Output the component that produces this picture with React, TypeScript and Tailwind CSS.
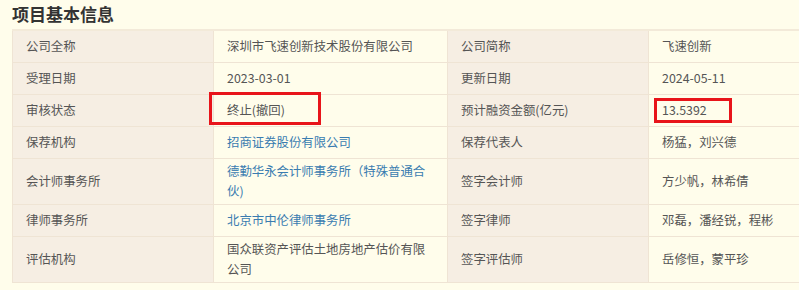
const FONT = { fontFamily: '"Noto Sans CJK SC", "Liberation Sans", sans-serif' }

type Cell = { text: string; link?: boolean; mark?: 'a' | 'b' }
type Row = { l1: string; v1: Cell; l2: string; v2: Cell; tall?: boolean }

const rows: Row[] = [
  { l1: '公司全称', v1: { text: '深圳市飞速创新技术股份有限公司' }, l2: '公司简称', v2: { text: '飞速创新' } },
  { l1: '受理日期', v1: { text: '2023-03-01' }, l2: '更新日期', v2: { text: '2024-05-11' } },
  { l1: '审核状态', v1: { text: '终止(撤回)', mark: 'a' }, l2: '预计融资金额(亿元)', v2: { text: '13.5392', mark: 'b' } },
  { l1: '保荐机构', v1: { text: '招商证券股份有限公司', link: true }, l2: '保荐代表人', v2: { text: '杨猛，刘兴德' } },
  { l1: '会计师事务所', v1: { text: '德勤华永会计师事务所（特殊普通合伙)', link: true }, l2: '签字会计师', v2: { text: '方少帆，林希倩' }, tall: true },
  { l1: '律师事务所', v1: { text: '北京市中伦律师事务所', link: true }, l2: '签字律师', v2: { text: '邓磊，潘经锐，程彬' } },
  { l1: '评估机构', v1: { text: '国众联资产评估土地房地产估价有限公司' }, l2: '签字评估师', v2: { text: '岳修恒，蒙平珍' }, tall: true },
]

function Label({ text, tall }: { text: string; tall?: boolean }) {
  return (
    <td className={`bg-[#f6eee3] border border-[#efe4d4] px-[13px] text-[#555] align-middle ${tall ? 'h-[46px]' : 'h-[32px]'}`}>
      {text}
    </td>
  )
}

function Value({ cell, tall }: { cell: Cell; tall?: boolean }) {
  return (
    <td className={`relative border border-[#efe4d4] pl-[13px] pr-[14px] align-middle leading-[20px] ${tall ? 'h-[46px]' : 'h-[32px]'} ${cell.link ? 'text-[#3a7cb0]' : 'text-[#555]'}`}>
      {cell.text}
      {cell.mark === 'a' && (
        <span className="absolute left-[-5px] top-[-3px] w-[112px] h-[33px] border-[3px] border-[#e8141a]" />
      )}
      {cell.mark === 'b' && (
        <span className="absolute left-[5px] top-[3px] w-[78px] h-[25px] border-[3px] border-[#e8141a]" />
      )}
    </td>
  )
}

export default function App() {
  return (
    <div className="w-[799px] h-[290px] bg-[#fffdeb] overflow-hidden" style={FONT}>
      <h2 className="pl-[12px] pt-[1px] h-[29px] text-[17px] font-bold text-[#333] leading-[26px]">项目基本信息</h2>
      <div className="pl-[12px]">
        <table className="w-[800px] table-fixed border-collapse text-[12.4px] border-t-2 border-t-[#f3ead9]">
          <colgroup>
            <col className="w-[201px]" />
            <col className="w-[234px]" />
            <col className="w-[201px]" />
            <col />
          </colgroup>
          <tbody>
            {rows.map(r => (
              <tr key={r.l1}>
                <Label text={r.l1} tall={r.tall} />
                <Value cell={r.v1} tall={r.tall} />
                <Label text={r.l2} tall={r.tall} />
                <Value cell={r.v2} tall={r.tall} />
              </tr>
            ))}
          </tbody>
        </table>
      </div>
    </div>
  )
}
